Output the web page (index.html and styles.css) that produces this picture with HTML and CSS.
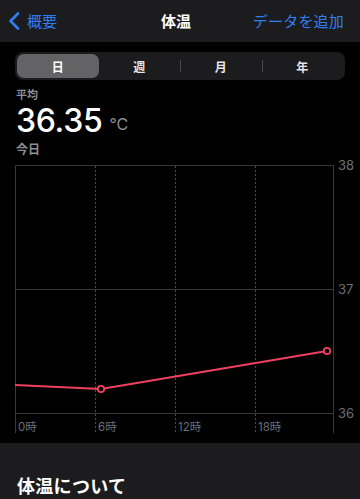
FILE: index.html
```html
<!DOCTYPE html>
<html lang="ja">
<head>
<meta charset="utf-8">
<link rel="stylesheet" href="styles.css">
</head>
<body>
<header class="nav">
  <a class="nav-back">
    <svg class="chev" width="12" height="18" viewBox="0 0 12 18"><path d="M10 1.5 L2.5 9 L10 16.5" fill="none" stroke="#2f7ff0" stroke-width="2.6" stroke-linecap="round" stroke-linejoin="round"/></svg>
    <span>概要</span>
  </a>
  <h1 class="nav-title">体温</h1>
  <a class="nav-action">データを追加</a>
</header>

<div class="segment">
  <div class="seg seg-active">日</div>
  <div class="seg">週</div>
  <div class="seg seg-div">月</div>
  <div class="seg seg-div">年</div>
</div>

<section class="summary">
  <div class="label">平均</div>
  <div class="value"><span class="num">36.35</span><span class="unit">°C</span></div>
  <div class="label label-day">今日</div>
</section>

<svg class="chart" width="360" height="287" viewBox="0 0 360 287">
  <g stroke="#38383a" stroke-width="1" fill="none">
    <line x1="15" y1="9.5" x2="333.5" y2="9.5"/>
    <line x1="15" y1="133.5" x2="333.5" y2="133.5"/>
    <line x1="15" y1="257.5" x2="333.5" y2="257.5"/>
    <line x1="15.5" y1="9" x2="15.5" y2="277"/>
    <line x1="333.5" y1="9" x2="333.5" y2="277"/>
  </g>
  <g stroke="#4a4a4c" stroke-width="1" stroke-dasharray="2 2" fill="none">
    <line x1="95.5" y1="10" x2="95.5" y2="277"/>
    <line x1="175.5" y1="10" x2="175.5" y2="277"/>
    <line x1="255.5" y1="10" x2="255.5" y2="277"/>
  </g>
  <g class="axis-y">
    <text x="338" y="14">38</text>
    <text x="338" y="138">37</text>
    <text x="338" y="262">36</text>
  </g>
  <g class="axis-x">
    <text x="18" y="275">0時</text>
    <text x="98" y="275">6時</text>
    <text x="178" y="275">12時</text>
    <text x="258" y="275">18時</text>
  </g>
  <polyline points="15,229 101,233 327,195" fill="none" stroke="#f0405f" stroke-width="2" stroke-linejoin="round"/>
  <circle cx="101" cy="233" r="3.2" fill="#000" stroke="#f0405f" stroke-width="1.8"/>
  <circle cx="327" cy="195" r="3.2" fill="#000" stroke="#f0405f" stroke-width="1.8"/>
</svg>

<section class="about">
  <h2 class="about-title">体温について</h2>
</section>
</body>
</html>
```

FILE: styles.css
```css
* { box-sizing: border-box; }
html, body {
  margin: 0;
  padding: 0;
  background: #000;
  color: #fff;
  font-family: "Noto Sans CJK JP", "Inter", "Noto Sans", sans-serif;
  width: 360px;
  height: 499px;
  overflow: hidden;
}
.nav {
  height: 42px;
  background: #1c1c1e;
  display: grid;
  grid-template-columns: 1fr auto 1fr;
  align-items: center;
  padding: 0 16px 0 8px;
}
.nav-back {
  display: flex;
  align-items: center;
  gap: 7px;
  color: #2f7ff0;
  font-size: 15px;
  line-height: 20px;
}
.chev { display: block; }
.nav-title {
  margin: 0;
  font-size: 15px;
  font-weight: 700;
  line-height: 20px;
  text-align: center;
}
.nav-action {
  justify-self: end;
  color: #2f7ff0;
  font-size: 15px;
  line-height: 20px;
  letter-spacing: 0.2px;
}
.segment {
  margin: 10px 15px 0;
  height: 28px;
  background: #1c1c1e;
  border-radius: 8px;
  padding: 2px;
  display: grid;
  grid-template-columns: repeat(4, 1fr);
}
.seg {
  display: flex;
  align-items: center;
  justify-content: center;
  font-size: 12px;
  font-weight: 700;
  color: #e5e5ea;
  position: relative;
}
.seg-active {
  background: #636366;
  border-radius: 7px;
  color: #fff;
}
.seg-div::before {
  content: "";
  position: absolute;
  left: 0;
  top: 6px;
  bottom: 6px;
  width: 1px;
  background: #48484a;
}
.summary {
  padding: 7px 16px 0;
  display: flex;
  flex-direction: column;
}
.label {
  font-size: 11px;
  line-height: 14px;
  font-weight: 700;
  color: #8e8e93;
}
.label-day {
  font-size: 12px;
  line-height: 15px;
}
.value {
  height: 40px;
  display: flex;
  align-items: center;
}
.num {
  font-family: "Inter", "Roboto", sans-serif;
  font-size: 32px;
  line-height: 38px;
  font-weight: 500;
  letter-spacing: -0.3px;
}
.unit {
  font-family: "Inter", "Roboto", sans-serif;
  font-size: 16px;
  line-height: 20px;
  color: #8e8e93;
  margin-left: 7px;
  margin-top: 6px;
}
.chart {
  display: block;
}
.axis-y text {
  font-family: "Inter", "Roboto", sans-serif;
  font-size: 13px;
  fill: #6e6e73;
}
.axis-x text {
  font-family: "Inter", "Noto Sans CJK JP", sans-serif;
  font-size: 11.5px;
  fill: #6e6e73;
}
.about {
  background: #1c1c1e;
  height: 56px;
  padding: 30px 17px 0;
}
.about-title {
  margin: 0;
  font-size: 18px;
  line-height: 24px;
  font-weight: 700;
  letter-spacing: 0.3px;
}
```
